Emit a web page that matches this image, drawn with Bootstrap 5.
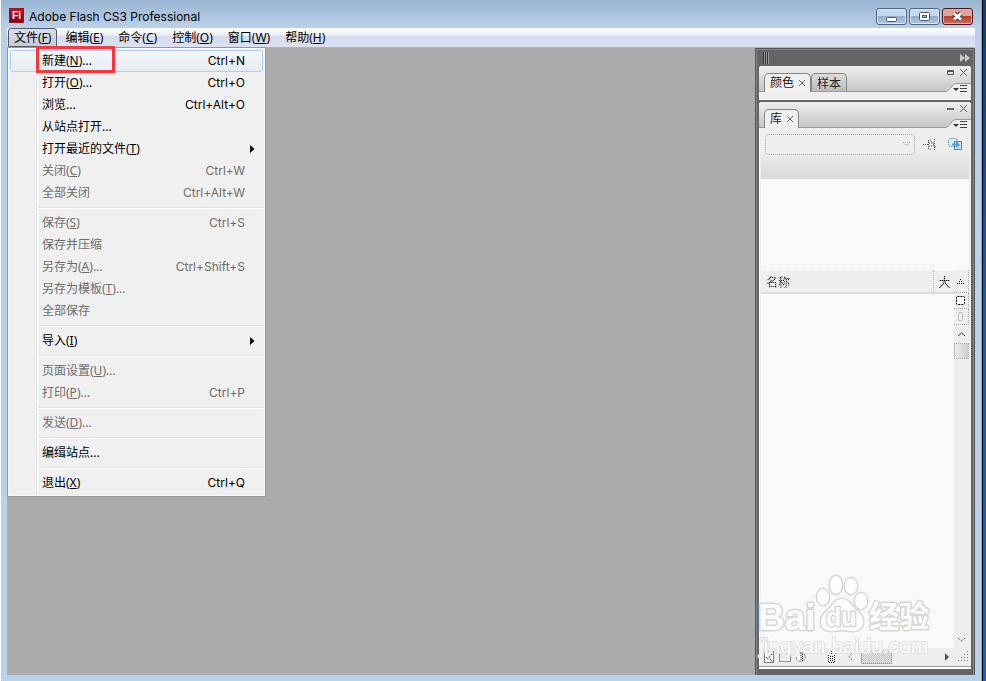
<!DOCTYPE html>
<html lang="zh-CN">
<head>
<meta charset="utf-8">
<meta name="viewport" content="width=device-width, initial-scale=1">
<title>Adobe Flash CS3 Professional</title>
<link href="https://cdn.jsdelivr.net/npm/bootstrap@5.3.0/dist/css/bootstrap.min.css" rel="stylesheet">
<style>
body{font:12px/20px "Noto Sans","Noto Sans CJK SC",sans-serif;color:#000;background:#0a5fc4;overflow:hidden}
button{font:inherit;color:inherit;padding:0;border:0;background:none}
svg{display:block}
.desk{padding-right:3px;background:linear-gradient(#0b3f82,#0660c6 300px,#0768d0)}
.frame{background:linear-gradient(#9ab5d2 0,#bad1ea 28px,#b9d1ea);border-left:1px solid #fff;border-right:1px solid #000;box-shadow:inset -1px 0 #35d4ef;padding:0 7px 6px 6px}
.titlebar{height:28px;padding:4px 2px 0 2px}
.logo{width:15px;height:15px;background:linear-gradient(#c01528,#760812);color:#fff;font:bold 10px/14px "Liberation Sans",sans-serif;text-align:center;border:1px solid #9b1220}
.caption{padding:3px 0 0 5px}
.caption,.menu span+span{font-family:Inter,sans-serif}
.winbtns{gap:2px}
.winbtn{width:31px;height:17px;border:1px solid #53657e;border-radius:3px;background:linear-gradient(#c5d7eb 0 46%,#91aecd 50%,#b2cbe5);box-shadow:inset 0 0 0 1px #d9e7f5}
.winbtn.end{border-color:#4b1420;background:linear-gradient(#dda298 0 44%,#b83e2b 50%,#c8755f);box-shadow:inset 0 0 0 1px #e3aea6}
.menubar{height:20px;padding-left:1px;gap:1px;background:linear-gradient(#fff,#e9edf6 40%,#d6dcee 45%,#dce1f2);border-bottom:1px solid #aeb1c2}
.menubar button{padding:0 7px;height:19px;line-height:20px}
.menubar .on{padding:0 5px;border:1px solid #555b66;border-radius:3px 3px 0 0;background:linear-gradient(#d8dde8,#c5cad9);line-height:18px}
.work{background:#ababab}
.menu{position:absolute;left:6px;top:47px;width:259px;border:1px solid #979797;background:linear-gradient(90deg,#f0f0f0 28px,#e2e3e3 28px 29px,#fff 29px 30px,#f0f0f0 30px);padding:2px;z-index:3;box-shadow:inset 0 0 0 1px #f8f8f8}
.menu button{display:flex;width:100%;height:22px;line-height:22px;padding:0 18px 0 32px;justify-content:space-between;text-align:left}
.menu button:disabled{color:#6d6d6d}
.menu .hot{border:1px solid #aecff7;border-radius:3px;padding:0 17px 0 31px;line-height:20px;background:linear-gradient(#f4f6f9,#e7edf4)}
.menu hr{height:2px;margin:3px 0 3px 28px;border:0;opacity:1;background:linear-gradient(#e0e0e0 50%,#fff 50%)}
.menu .sub{padding-right:8px}
.callout{position:absolute;left:35px;top:46px;width:79px;height:27px;border:3px solid #f9373c;z-index:4}
.dock{width:220px;background:#646464;border:1px solid #555;border-width:1px 1px 0;padding:0 3px 6px;box-shadow:inset 1px 1px #858585,inset -1px 0 #858585}
.grip{height:17px;padding:2px 1px 0 4px}
.pane{background:#eee;border-radius:3px 3px 0 0;box-shadow:inset 1px 1px #fff}
.pane.first{height:34px;margin-bottom:2px;border-bottom:1px solid #fafafa}
.strip{height:26px;background:linear-gradient(#efefef,#c6c6c6);border-radius:3px 3px 0 0;padding-left:5px;border-bottom:1px solid #999}
.tabx{height:18px;border:1px solid #858585;border-bottom:0;border-radius:5px 5px 0 0;padding:0 5px;line-height:20px;background:linear-gradient(#ddd,#bbb);color:#222}
.tabx.on{background:#f0f0f0;height:19px;margin-bottom:-1px;padding-right:4px}
.corner{width:26px;height:24px;margin-bottom:-1px}
.inner{margin:0 2px}
.tools{height:51px;padding:6px 6px 0 4px;background:linear-gradient(#eee 20px,#d9d9d9)}
.tools select{width:150px;height:21px;border:1px dotted #aaa;border-radius:4px;background:#eee;appearance:none}
.combo .tri{position:absolute;right:5px;top:8px}
.dither{background:repeating-conic-gradient(#fff 0 25%,#f4f4f4 0 50%) 0 0/2px 2px}
.preview{height:91px}
.headrow{height:23px;background:#eee;border-top:1px dotted #fff;border-bottom:2px solid #ddd;table-layout:fixed;margin:0}
.headrow th{font-weight:400;padding:3px 0 0 5px;line-height:18px;white-space:nowrap}
.headrow th+th{width:21px;border-left:1px dotted #bbb}
.speck{color:transparent;background:repeating-conic-gradient(#000 0 25%,#999 0 50%) 0 0/2px 2px;-webkit-background-clip:text;background-clip:text}
.side{width:16px;background:#eee}
.side button{display:flex;align-items:center;justify-content:center;width:15px;height:16px;border:1px dotted #aaa;border-width:0 1px 1px 0}
.side .plain{border:0}
.side .head{height:23px}
.side .up{height:18px}
.side .thumb{border-width:1px;background:linear-gradient(90deg,#eee,#ccc)}
.foot{height:17px;background:#eee;padding:0 0 0 2px}
.foot .hthumb{width:31px;height:14px;border:1px dotted #999;background:repeating-conic-gradient(#eee 0 25%,#bbb 0 50%) 0 0/2px 2px}
.rim{height:4px;background:linear-gradient(#eee 25%,#999 25% 50%,#fff 50%)}
.stamp{position:absolute;right:30px;bottom:18px;pointer-events:none}
</style>
<script src="https://cdn.jsdelivr.net/npm/bootstrap@5.3.0/dist/js/bootstrap.bundle.min.js"></script>
</head>
<body>
<div class="desk vh-100">
<div class="frame h-100 d-flex flex-column position-relative">
  <header class="titlebar d-flex">
    <div class="logo mt-1">Fl</div>
    <div class="caption flex-grow-1">Adobe Flash CS3 Professional</div>
    <div class="winbtns d-flex pt-1">
      <button class="winbtn" aria-label="最小化"><svg width="29" height="15"><rect x="9.500" y="8.500" width="10" height="4" rx="1" fill="#fff" stroke="#4d5a6b"/></svg></button>
      <button class="winbtn" aria-label="最大化"><svg width="29" height="15"><rect x="9.500" y="3.500" width="10" height="8" rx="1" fill="#fff" stroke="#4d5a6b"/><rect x="12.500" y="6.500" width="4" height="2" fill="#8fb0d5" stroke="#4d5a6b"/></svg></button>
      <button class="winbtn end" aria-label="关闭"><svg width="29" height="15"><path d="M11 4.500 18 10.500M18 4.500 11 10.500" stroke="#53434b" stroke-width="5"/><path d="M11 4.500 18 10.500M18 4.500 11 10.500" stroke="#fff" stroke-width="2.800"/></svg></button>
    </div>
  </header>
  <nav class="menubar d-flex">
    <button class="on">文件(<u>F</u>)</button><button>编辑(<u>E</u>)</button><button>命令(<u>C</u>)</button><button>控制(<u>O</u>)</button><button>窗口(<u>W</u>)</button><button>帮助(<u>H</u>)</button>
  </nav>
  <div class="menu">
    <button class="hot"><span>新建(<u>N</u>)...</span><span>Ctrl+N</span></button>
    <button><span>打开(<u>O</u>)...</span><span>Ctrl+O</span></button>
    <button><span>浏览...</span><span>Ctrl+Alt+O</span></button>
    <button><span>从站点打开...</span></button>
    <button class="sub align-items-center"><span>打开最近的文件(<u>T</u>)</span><svg width="5" height="8"><path d="M0 0 4.500 4 0 8z"/></svg></button>
    <button disabled><span>关闭(<u>C</u>)</span><span>Ctrl+W</span></button>
    <button disabled><span>全部关闭</span><span>Ctrl+Alt+W</span></button>
    <hr>
    <button disabled><span>保存(<u>S</u>)</span><span>Ctrl+S</span></button>
    <button disabled><span>保存并压缩</span></button>
    <button disabled><span>另存为(<u>A</u>)...</span><span>Ctrl+Shift+S</span></button>
    <button disabled><span>另存为模板(<u>T</u>)...</span></button>
    <button disabled><span>全部保存</span></button>
    <hr>
    <button class="sub align-items-center"><span>导入(<u>I</u>)</span><svg width="5" height="8"><path d="M0 0 4.500 4 0 8z"/></svg></button>
    <hr>
    <button disabled><span>页面设置(<u>U</u>)...</span></button>
    <button disabled><span>打印(<u>P</u>)...</span><span>Ctrl+P</span></button>
    <hr>
    <button disabled><span>发送(<u>D</u>)...</span></button>
    <hr>
    <button><span>编缉站点...</span></button>
    <hr>
    <button><span>退出(<u>X</u>)</span><span>Ctrl+Q</span></button>
  </div>
  <div class="callout"></div>
  <main class="work flex-grow-1 d-flex justify-content-end">
    <aside class="dock d-flex flex-column">
      <div class="grip d-flex justify-content-between">
        <svg width="7" height="13"><path d="M.5 1v12M2.500 1v12M4.500 1v12" stroke="#333"/><path d="M1.500 1v12M3.500 1v12M5.500 1v12" stroke="#999"/></svg>
        <svg width="10" height="13"><path d="M0 3 5 7 0 11zM5 3 10 7 5 11z" fill="#ccc"/></svg>
      </div>
      <section class="pane first">
        <div class="strip d-flex align-items-end">
          <button class="tabx on d-flex align-items-center">颜色<svg class="ms-1" width="8" height="8"><path d="M1 1 7 7M7 1 1 7" stroke="#666"/></svg></button>
          <button class="tabx">样本</button>
          <svg class="corner ms-auto" viewBox="0 0 26 24"><path d="M0 24 10 15.500H26V24z" fill="#eee"/><path d="M0 23.500C6 23 6 15.500 12 15.500H26" fill="none" stroke="#999"/><path d="M2.500 2.500h6v4h-6zM2 3.500h7" fill="none" stroke="#555"/><path d="M15 1 22 8M22 1 15 8" stroke="#666"/><path d="M8 20h6l-3 3z" fill="#333"/><path d="M15 17.500h7M15 20.500h7M15 23.500h7" stroke="#444"/></svg>
        </div>
      </section>
      <section class="pane flex-grow-1 d-flex flex-column">
        <div class="strip d-flex align-items-end">
          <button class="tabx on d-flex align-items-center">库<svg class="ms-1" width="8" height="8"><path d="M1 1 7 7M7 1 1 7" stroke="#666"/></svg></button>
          <svg class="corner ms-auto" viewBox="0 0 26 24"><path d="M0 24 10 15.500H26V24z" fill="#eee"/><path d="M0 23.500C6 23 6 15.500 12 15.500H26" fill="none" stroke="#999"/><path d="M2 5h7" stroke="#666" stroke-width="2"/><path d="M15 1 22 8M22 1 15 8" stroke="#666"/><path d="M8 20h6l-3 3z" fill="#333"/><path d="M15 17.500h7M15 20.500h7M15 23.500h7" stroke="#444"/></svg>
        </div>
        <div class="inner flex-grow-1 d-flex flex-column">
        <div class="tools d-flex align-items-start">
          <div class="combo position-relative d-flex"><select aria-label="库文档" disabled><option></option></select><svg class="tri" width="7" height="5"><path d="M0 0h7L3.500 4z" fill="none" stroke="#888" stroke-dasharray="1 1"/></svg></div>
          <button class="ms-2 mt-1" aria-label="固定当前库"><svg width="14" height="12"><path d="M0 6.500h5M5.500 2v9M5.500 3.500 9 1M5.500 10 9 12M6 5h5M6 8h5M11.500 1v11M8 3l5 7" fill="none" stroke="#555" stroke-dasharray="1 1"/></svg></button>
          <button class="ms-auto mt-1" aria-label="新建库面板"><svg width="15" height="12"><rect x=".5" y=".5" width="9" height="8" rx="2" fill="#d6f0f2" stroke="#39858d" stroke-dasharray="1 1"/><rect x="6.500" y="3.500" width="7" height="8" fill="#cde" stroke="#123" stroke-dasharray="1 1"/><path d="M4 5.500h4V3l4 4-4 3V7.500H4z" fill="#4a9bf0"/></svg></button>
        </div>
        <div class="preview dither"></div>
        <div class="d-flex flex-grow-1 dither">
          <div class="flex-grow-1">
            <table class="headrow w-100"><thead><tr><th><span class="speck">名称</span></th><th><span class="speck">大</span></th></tr></thead></table>
          </div>
          <div class="side d-flex flex-column">
            <button class="head" aria-label="排序"><svg width="8" height="6"><path d="M3 1.500h2M2 3.500h4M0 5.500h8" stroke="#000" stroke-dasharray="1 1"/></svg></button>
            <button aria-label="宽视图"><svg width="10" height="10"><rect x=".5" y=".5" width="8" height="8" rx="1" fill="#fff" stroke="#000" stroke-dasharray="2 1"/></svg></button>
            <button aria-label="窄视图"><svg width="6" height="9"><rect x=".5" y=".5" width="4" height="8" rx="1" fill="none" stroke="#999" stroke-dasharray="1 1"/></svg></button>
            <button class="plain up" aria-label="向上"><svg width="7" height="4"><path d="M0 4 3.500 1 7 4" fill="none" stroke="#333"/></svg></button>
            <button class="thumb" aria-label="滚动块"></button>
            <button class="plain mt-auto" aria-label="向下"><svg width="7" height="4"><path d="M0 0 3.500 3 7 0" fill="none" stroke="#333" stroke-dasharray="1 1"/></svg></button>
          </div>
        </div>
        <div class="foot d-flex align-items-center">
          <button aria-label="新建元件"><svg width="12" height="12"><path d="M1.500.5h9v11h-9zM3 6l2 2 4-5M7 8l3 3" fill="#fff" stroke="#000" stroke-dasharray="1 1"/></svg></button>
          <button class="ms-1" aria-label="新建文件夹"><svg width="12" height="12"><path d="M.5 3.500h4v-2h3v2h4v7H.5z" fill="none" stroke="#333" stroke-dasharray="1 1"/></svg></button>
          <button class="ms-1" aria-label="属性"><svg width="11" height="12"><circle cx="5.500" cy="6" r="4.500" fill="#fff" stroke="#333" stroke-dasharray="1 1"/><path d="M6 2v8M7.500 3v7" stroke="#111" stroke-dasharray="1 1"/></svg></button>
          <button class="ms-3 ps-1" aria-label="删除"><svg width="11" height="12"><path d="M1 2.500h9M3 .5h4M2.500 4v7.500h6V4M4.500 5v6M6.500 5v6" fill="none" stroke="#111" stroke-dasharray="1 1"/></svg></button>
          <button class="ms-2 pe-1" aria-label="向左"><svg width="8" height="7"><path d="M7 0 4 3.500 7 7" fill="none" stroke="#444" stroke-dasharray="1 1"/></svg></button>
          <button class="hthumb ms-1" aria-label="水平滚动块"></button>
          <button class="ms-auto" aria-label="向右"><svg width="5" height="8"><path d="M0 0 4 4 0 8z" fill="#555"/></svg></button>
          <svg class="ms-2" width="11" height="11"><path d="M9.500 0v11M6.500 3v8M3.500 6v5M.5 9v2" stroke="#777" stroke-dasharray="1 2"/></svg>
        </div>
        </div>
        <div class="rim"></div>
      </section>
    </aside>
  </main>
  <svg class="stamp" width="196" height="90" viewBox="756 573 196 90" fill="#fff" fill-opacity=".9" stroke="#d8d8d8" stroke-width="3" stroke-linejoin="round" paint-order="stroke">
    <text x="758" y="630" font-family="Liberation Sans, sans-serif" font-weight="700" font-size="37">Bai</text>
    <ellipse cx="823" cy="597" rx="6" ry="8"/><ellipse cx="836" cy="585" rx="6" ry="9"/><ellipse cx="851" cy="586" rx="6" ry="8"/><ellipse cx="861" cy="601" rx="6" ry="8"/>
    <path d="M842 599c-8 0-10 8-15 12-7 5-8 14-3 18 6 4 12 1 18 1s12 3 18-1c5-4 4-13-3-18-5-4-7-12-15-12z"/>
    <text x="826" y="626" font-family="Liberation Sans, sans-serif" font-weight="700" font-size="25">du</text>
    <text x="869" y="627" font-family="Noto Sans CJK SC, sans-serif" font-weight="700" font-size="30">经验</text>
    <text x="759" y="653" font-family="Liberation Sans, sans-serif" font-size="21" stroke-width="2" stroke="#e0e0e0">jingyan.baidu.com</text>
  </svg>
</div>
</div>
</body>
</html>
